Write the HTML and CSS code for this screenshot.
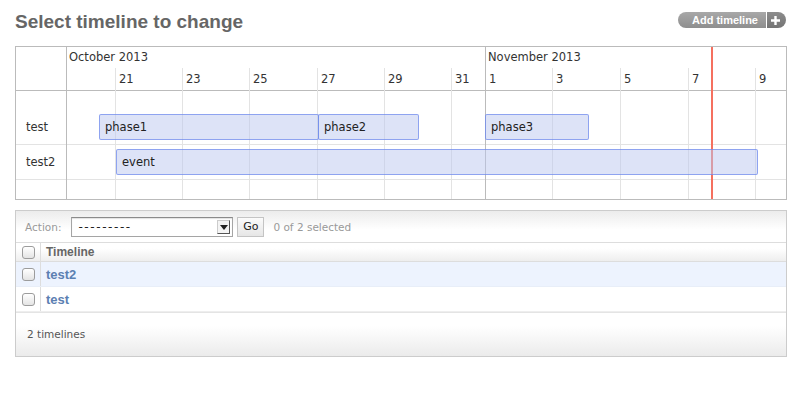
FILE: index.html
```html
<!DOCTYPE html>
<html>
<head>
<meta charset="utf-8">
<title>Select timeline to change</title>
<link rel="stylesheet" href="styles.css">
</head>
<body>
<div class="page">
  <div class="page-head">
    <h1>Select timeline to change</h1>
    <a class="addlink" href="#"><span class="addlink-text">Add timeline</span><span class="addlink-plus"><svg width="11" height="11" viewBox="0 0 11 11"><path d="M5.5 1v9M1 5.5h9" stroke="#fff" stroke-width="2.4"/></svg></span></a>
  </div>

  <div class="chart">
    <div class="chart-labels">
      <div class="chart-head"></div>
      <div class="chart-row row-test"><div class="lane-label">test</div></div>
      <div class="chart-row row-test2"><div class="lane-label">test2</div></div>
      <div class="chart-row row-empty"></div>
    </div>
    <div class="chart-time">
      <div class="grid">
        <div class="tick" style="left:48px">21</div>
        <div class="tick" style="left:115px">23</div>
        <div class="tick" style="left:182px">25</div>
        <div class="tick" style="left:250px">27</div>
        <div class="tick" style="left:317px">29</div>
        <div class="tick" style="left:384px">31</div>
        <div class="tick" style="left:418px">1</div>
        <div class="tick" style="left:485px">3</div>
        <div class="tick" style="left:553px">5</div>
        <div class="tick" style="left:621px">7</div>
        <div class="tick" style="left:688px">9</div>
        <div class="month" style="left:0">October 2013</div>
        <div class="month month-line" style="left:418px">November 2013</div>
        <div class="now" style="left:644px"></div>
      </div>
      <div class="chart-head"></div>
      <div class="chart-row row-test">
        <div class="lane">
          <div class="bar" style="left:32px;width:220px">phase1</div>
          <div class="bar" style="left:251px;width:101px">phase2</div>
          <div class="bar" style="left:418px;width:104px">phase3</div>
        </div>
      </div>
      <div class="chart-row row-test2">
        <div class="lane">
          <div class="bar" style="left:49px;width:642px">event</div>
        </div>
      </div>
      <div class="chart-row row-empty"></div>
    </div>
  </div>

  <div class="module">
    <div class="actions">
      <label class="actions-label">Action:</label>
      <div class="select"><span class="select-value">---------</span><span class="select-arrow"></span></div>
      <button class="go" type="button">Go</button>
      <span class="counter">0 of 2 selected</span>
    </div>
    <div class="results">
      <div class="res-row res-head">
        <div class="cell-check"><input type="checkbox" class="cb"></div>
        <div class="cell-main">Timeline</div>
      </div>
      <div class="res-row res-alt">
        <div class="cell-check"><input type="checkbox" class="cb"></div>
        <div class="cell-main"><a href="#">test2</a></div>
      </div>
      <div class="res-row res-last">
        <div class="cell-check"><input type="checkbox" class="cb"></div>
        <div class="cell-main"><a href="#">test</a></div>
      </div>
    </div>
    <p class="paginator">2 timelines</p>
  </div>
</div>
</body>
</html>
```
FILE: styles.css
```css
* { box-sizing: border-box; }
html, body { margin: 0; padding: 0; background: #fff; }
body { font-family: "DejaVu Sans", sans-serif; color: #333; font-size: 11px; }

.page { padding: 0 12px 0 15px; }

.page-head { display: flex; justify-content: space-between; align-items: flex-start; padding-top: 11px; }
.page-head h1 { margin: 0; font: bold 19px/21px "Liberation Sans", Arial, sans-serif; color: #666; }

.addlink { margin: 1px 1px 0 0; display: flex; height: 16px; border-radius: 8px; overflow: hidden; text-decoration: none; color: #fff; font: bold 11px/16px "Liberation Sans", Arial, sans-serif; }
.addlink-text { background: linear-gradient(#a8a8a8, #8e8e8e); padding: 0 8px 0 14px; }
.addlink-plus { background: linear-gradient(#8c8c8c, #747474); border-left: 1px solid #fff; width: 20px; display: flex; align-items: center; justify-content: center; padding-right: 2px; }

/* chart */
.chart { margin-top: 14px; border: 1px solid #bbb; display: flex; font-size: 11.5px; color: #333; }
.chart-labels { width: 51px; flex: none; border-right: 1px solid #bbb; }
.chart-time { flex: 1; position: relative; }
.chart-head { height: 44px; border-bottom: 1px solid #bbb; }
.chart-row { border-bottom: 1px solid #e3e3e3; padding-bottom: 3px; }
.row-test { height: 54px; padding-top: 23px; }
.row-test2 { height: 35px; padding-top: 4px; }
.row-empty { height: 19px; border-bottom: 0; padding: 0; }
.lane { position: relative; height: 26px; }
.lane-label { line-height: 26px; padding-left: 10px; }

.grid { position: absolute; top: 0; left: 0; right: 0; bottom: 0; }
.tick { position: absolute; top: 21px; bottom: 0; border-left: 1px solid #e3e3e3; padding-left: 3px; line-height: 22px; white-space: nowrap; }
.month { position: absolute; top: 0; bottom: 0; padding-left: 2px; line-height: 21px; white-space: nowrap; }
.month-line { border-left: 1px solid #bbb; }
.now { position: absolute; top: 0; bottom: 0; width: 2px; background: #f5705f; }

.bar { position: absolute; top: 0; height: 26px; background: rgba(187, 199, 239, 0.5); border: 1px solid rgba(90, 120, 235, 0.6); border-radius: 2px; padding-left: 5px; line-height: 24px; white-space: nowrap; color: #222; }

/* changelist */
.module { margin-top: 10px; border: 1px solid #ccc; }
.actions { height: 32px; border-bottom: 1px solid #ddd; display: flex; align-items: center; padding-left: 9px; background: linear-gradient(#ececec, #fff 60%); color: #999; font-size: 10.5px; }
.select { margin-left: 10px; width: 162px; height: 20px; border: 1px solid #a5a5a5; border-top-color: #8a8a8a; background: #fff; display: flex; align-items: center; box-shadow: inset 0 1px 1px rgba(0,0,0,0.12); }
.select-value { padding-left: 6px; color: #222; font-size: 12px; letter-spacing: 1.6px; }
.select-arrow { margin-left: auto; margin-right: 2px; width: 13px; height: 14px; border: 1px solid #ccc; border-right-color: #555; border-bottom-color: #555; background: #f4f4f4; position: relative; }
.select-arrow::after { content: ""; position: absolute; left: 2px; top: 4px; border-left: 4px solid transparent; border-right: 4px solid transparent; border-top: 5px solid #222; }
.go { margin-left: 4px; width: 27px; height: 20px; padding: 0; border: 1px solid #c4c4c4; border-radius: 0; background: linear-gradient(#fbfbfb, #e6e6e6); font: 11px/18px "DejaVu Sans", sans-serif; color: #222; }
.counter { margin-left: 9px; }

.res-row { display: grid; grid-template-columns: 25px 1fr; height: 25px; border-bottom: 1px solid #e8eef8; }
.res-head { height: 19px; border-bottom: 1px solid #ddd; background: linear-gradient(#fff 30%, #eee); }
.res-alt { background: #edf3fe; }
.res-last { border-bottom-color: #eee; }
.cell-check { border-right: 1px solid #ddd; display: flex; align-items: center; padding-left: 6px; }
.cell-main { display: flex; align-items: center; padding-left: 5px; font: bold 13px "Liberation Sans", Arial, sans-serif; }
.res-head .cell-main { font-size: 12px; color: #666; }
.cell-main a { color: #5b80b2; text-decoration: none; }
.cb { -webkit-appearance: none; appearance: none; margin: 0; width: 13px; height: 13px; border: 1px solid #9c9c9c; border-radius: 3px; background: linear-gradient(#fff, #e4e4e4); }

.paginator { margin: 0; height: 44px; border-top: 1px solid #e4e4e4; line-height: 43px; padding-left: 11px; color: #555; font-size: 10.5px; background: linear-gradient(#fff 30%, #ebebeb); }
```
